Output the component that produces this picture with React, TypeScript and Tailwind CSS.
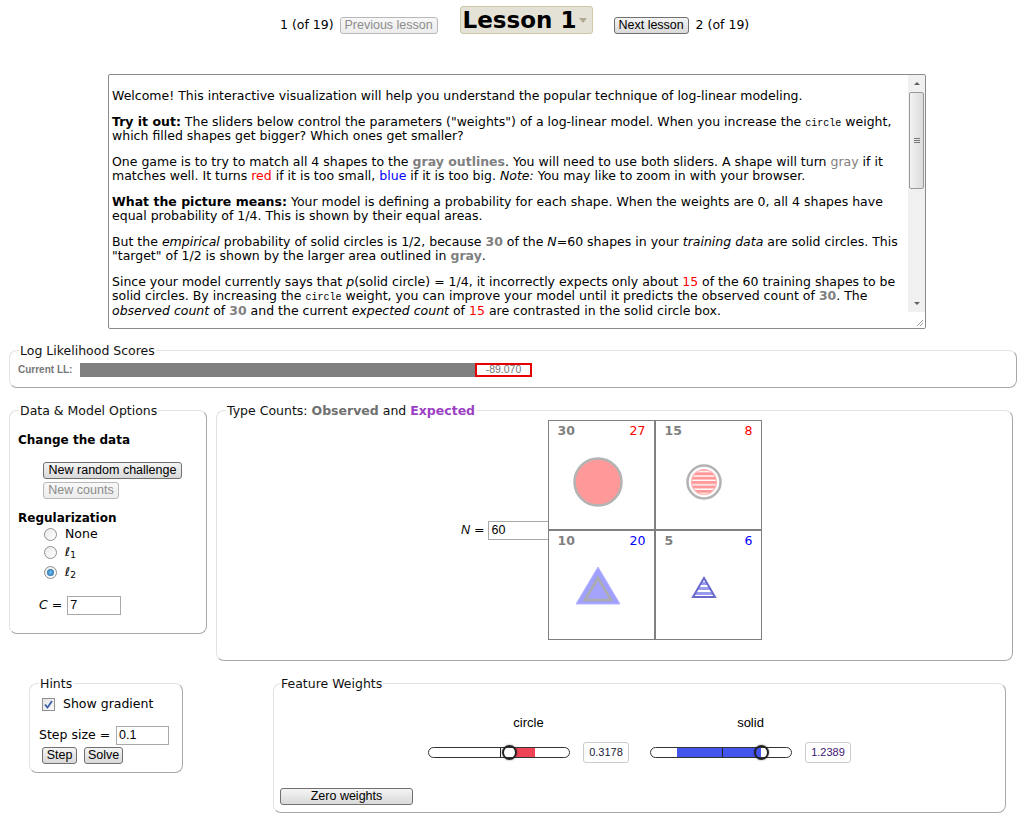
import React from 'react';

const boxCls =
  'rounded-[8px] border border-t-[#e2e2e2] border-l-[#e2e2e2] border-r-[#a8a8a8] border-b-[#a8a8a8] min-w-0';

const Legend = ({ children }: { children: React.ReactNode }) => (
  <legend className="ml-[9px] px-[1px] text-[12.5px] leading-[15px] text-[#111]">{children}</legend>
);

const Btn = ({
  children,
  disabled,
  className = '',
}: {
  children: React.ReactNode;
  disabled?: boolean;
  className?: string;
}) => (
  <button
    className={`h-[17px] rounded-[3px] border px-[3px] text-[12.5px] leading-[15px] font-['Liberation_Sans',Arial,sans-serif] bg-linear-to-b ${
      disabled
        ? 'border-[#b8b8b8] text-[#8c8c8c] from-[#f8f8f8] to-[#ececec]'
        : 'border-[#707070] text-black from-[#f4f4f4] to-[#d9d9d9]'
    } ${className}`}
  >
    {children}
  </button>
);

const Gray = ({ children }: { children: React.ReactNode }) => (
  <b className="text-[#808080]">{children}</b>
);
const Code = ({ children }: { children: React.ReactNode }) => (
  <span className="font-['Liberation_Mono',monospace] text-[10px] leading-[0]">{children}</span>
);

const Radio = ({ checked }: { checked?: boolean }) => (
  <span className="inline-flex h-[13px] w-[13px] items-center justify-center rounded-full border border-[#8e8f8f] bg-linear-to-br from-[#eaeaea] to-[#ffffff]">
    {checked && <span className="h-[7px] w-[7px] rounded-full bg-radial from-[#6ec3f5] to-[#1a5b9a]" />}
  </span>
);

const Slider = ({
  fillFrom,
  fillTo,
  color,
  thumb,
}: {
  fillFrom: number;
  fillTo: number;
  color: string;
  thumb: number;
}) => (
  <div className="relative h-[11px] w-[142px] rounded-full border border-[#333] bg-white">
    <div
      className="absolute top-0 h-[9px]"
      style={{ left: fillFrom, width: fillTo - fillFrom, background: color }}
    />
    <div className="absolute left-[71px] top-0 h-[9px] w-[1px] bg-[#222]" />
    <div
      className="absolute top-[-3px] h-[15px] w-[15px] rounded-full border-2 border-[#222] shadow-[0_0_2px_rgba(0,0,0,0.5)]"
      style={{ left: thumb - 7.5 }}
    />
  </div>
);

const Cell = ({
  obs,
  exp,
  expColor,
  children,
}: {
  obs: string;
  exp: string;
  expColor: string;
  children: React.ReactNode;
}) => (
  <td className="h-[109px] w-[106px] border border-[#808080] p-0 align-top">
    <div className="flex h-[20px] items-center justify-between pl-[8px] pr-[9px] text-[12.5px] leading-[14px]">
      <b className="text-[#808080]">{obs}</b>
      <span className={expColor}>{exp}</span>
    </div>
    <svg width="105" height="88" viewBox="0 0 105 88" className="block">
      {children}
    </svg>
  </td>
);

export default function App() {
  return (
    <div className="min-h-[819px] w-[1021px] bg-white font-['DejaVu_Sans',Verdana,sans-serif] text-[12.5px] text-black">
      {/* header */}
      <div className="flex h-[40px] items-start pl-[280px] text-[12.5px]">
        <span className="mt-[17px] leading-[16px]">1 (of 19)</span>
        <Btn disabled className="ml-[6px] mt-[17px] w-[98px]">Previous lesson</Btn>
        <div className="ml-[22px] mt-[6px] flex h-[28px] w-[133px] items-center rounded-[3px] border border-[#cfc8a6] bg-[#e4e2d7] pl-[2px]">
          <span className="text-[23px] font-bold leading-[26px]">Lesson 1</span>
          <span className="ml-auto mr-[5px] h-0 w-0 border-x-[4px] border-t-[5px] border-x-transparent border-t-[#b1aa90]" />
        </div>
        <Btn className="ml-[21px] mt-[17px] w-[75px]">Next lesson</Btn>
        <span className="ml-[7px] mt-[17px] leading-[16px]">2 (of 19)</span>
      </div>

      {/* intro text */}
      <div className="ml-[108px] mt-[34px] flex h-[255px] w-[818px] overflow-hidden rounded-[2px] border border-[#8a8a8a]">
        <div className="flex-1 overflow-hidden whitespace-nowrap pl-[3px] pt-[14px] leading-[14.4px]">
          <p className="mb-[11.3px]">
            Welcome! This interactive visualization will help you understand the popular technique of log-linear modeling.
          </p>
          <p className="mb-[11.3px]">
            <b>Try it out:</b> The sliders below control the parameters ("weights") of a log-linear model. When you increase the{' '}
            <Code>circle</Code> weight,
            <br />
            which filled shapes get bigger? Which ones get smaller?
          </p>
          <p className="mb-[11px]">
            One game is to try to match all 4 shapes to the <Gray>gray outlines</Gray>. You will need to use both sliders. A shape will
            turn <span className="text-[#808080]">gray</span> if it
            <br />
            matches well. It turns <span className="text-[#ff0000]">red</span> if it is too small,{' '}
            <span className="text-[#0000ff]">blue</span> if it is too big. <i>Note:</i> You may like to zoom in with your browser.
          </p>
          <p className="mb-[11.3px]">
            <b>What the picture means:</b> Your model is defining a probability for each shape. When the weights are 0, all 4 shapes
            have
            <br />
            equal probability of 1/4. This is shown by their equal areas.
          </p>
          <p className="mb-[11.3px]">
            But the <i>empirical</i> probability of solid circles is 1/2, because <Gray>30</Gray> of the <i>N</i>=60 shapes in your{' '}
            <i>training data</i> are solid circles. This
            <br />
            "target" of 1/2 is shown by the larger area outlined in <Gray>gray</Gray>.
          </p>
          <p>
            Since your model currently says that <i>p</i>(solid circle) = 1/4, it incorrectly expects only about{' '}
            <span className="text-[#ff0000]">15</span> of the 60 training shapes to be
            <br />
            solid circles. By increasing the <Code>circle</Code> weight, you can improve your model until it predicts the observed
            count of <Gray>30</Gray>. The
            <br />
            <i>observed count</i> of <Gray>30</Gray> and the current <i>expected count</i> of{' '}
            <span className="text-[#ff0000]">15</span> are contrasted in the solid circle box.
          </p>
        </div>
        {/* scrollbar */}
        <div className="flex w-[17px] flex-col bg-[#f0f0f0]">
          <div className="flex h-[17px] items-center justify-center">
            <span className="h-0 w-0 border-x-[3px] border-b-[3px] border-x-transparent border-b-[#606060]" />
          </div>
          <div className="mx-[1px] flex h-[97px] items-center justify-center rounded-[2px] border border-[#9a9a9a] bg-linear-to-r from-[#f2f2f2] to-[#dcdcdc]">
            <div className="flex w-[6px] flex-col gap-[1px]">
              <span className="h-[1px] bg-[#777]" />
              <span className="h-[1px] bg-[#777]" />
              <span className="h-[1px] bg-[#777]" />
            </div>
          </div>
          <div className="flex-1" />
          <div className="flex h-[17px] items-center justify-center">
            <span className="h-0 w-0 border-x-[3px] border-t-[3px] border-x-transparent border-t-[#606060]" />
          </div>
          <div className="relative h-[16px] bg-white">
            <svg width="16" height="16" className="absolute right-0 top-0">
              <path d="M14 8 L8 14 M14 11 L11 14" stroke="#999" strokeWidth="1" />
            </svg>
          </div>
        </div>
      </div>

      {/* log likelihood */}
      <fieldset className={`${boxCls} ml-[9px] mt-[14px] h-[45px] w-[1008px]`}>
        <Legend>Log Likelihood Scores</Legend>
        <div className="mt-[4px] flex items-center pl-[8px]">
          <span className="w-[62px] font-['Liberation_Sans',Arial,sans-serif] text-[10px] font-bold text-[#777]">Current LL:</span>
          <div className="flex h-[14px] w-[452px] bg-[#808080]">
            <div className="flex-1" />
            <div className="flex w-[57px] items-center justify-center border-2 border-[#e60000] bg-white font-['Liberation_Sans',Arial,sans-serif] text-[10.5px] text-[#777]">
              -89.070
            </div>
          </div>
        </div>
      </fieldset>

      {/* middle row */}
      <div className="mt-[15px] flex items-start">
        <fieldset className={`${boxCls} ml-[9px] h-[231px] w-[198px]`}>
          <Legend>Data &amp; Model Options</Legend>
          <div className="pl-[8px]">
            <div className="mt-[14px] text-[12px] font-bold leading-[16px]">Change the data</div>
            <div className="ml-[25px] mt-[14px] flex flex-col items-start gap-[3px]">
              <Btn className="w-[139px]">New random challenge</Btn>
              <Btn disabled className="w-[76px]">New counts</Btn>
            </div>
            <div className="mt-[11px] text-[12px] font-bold leading-[16px]">Regularization</div>
            <div className="ml-[26px] flex flex-col text-[12.5px]">
              <label className="flex h-[17px] items-center gap-[8px]">
                <Radio /> None
              </label>
              <label className="flex h-[19px] items-center gap-[8px]">
                <Radio />
                <span>
                  <i>ℓ</i>
                  <sub className="text-[9px]">1</sub>
                </span>
              </label>
              <label className="flex h-[20px] items-center gap-[8px]">
                <Radio checked />
                <span>
                  <i>ℓ</i>
                  <sub className="text-[9px]">2</sub>
                </span>
              </label>
            </div>
            <div className="ml-[21px] mt-[14px] flex items-center text-[12.5px]">
              <i>C</i>&nbsp;=&nbsp;
              <div className="ml-[1px] flex h-[19px] w-[54px] items-center border border-[#a9a9a9] pl-[2px] font-['Liberation_Sans',Arial,sans-serif] text-[12.5px]">
                7
              </div>
            </div>
          </div>
        </fieldset>

        <fieldset className={`${boxCls} ml-[9px] h-[258px] w-[797px]`}>
          <Legend>
            Type Counts: <b className="text-[#707070]">Observed</b> and <b className="text-[#9b3fc4]">Expected</b>
          </Legend>
          <div className="mt-[2px] flex items-center pl-[244px]">
            <span className="text-[12.5px]">
              <i className="font-['Liberation_Sans',Arial,sans-serif]">N</i> =
            </span>
            <div className="ml-[4px] flex h-[19px] w-[61px] items-center border border-[#a9a9a9] pl-[2px] font-['Liberation_Sans',Arial,sans-serif] text-[12.5px]">
              60
            </div>
            <table className="-ml-[1px] border-separate border-spacing-0">
              <tbody>
                <tr>
                  <Cell obs="30" exp="27" expColor="text-[#ff0000]">
                    <circle cx="49" cy="41" r="23.5" fill="#ff9999" stroke="#b3b3b3" strokeWidth="2.5" />
                  </Cell>
                  <Cell obs="15" exp="8" expColor="text-[#ff0000]">
                    <defs>
                      <pattern id="pinkStripes" width="6" height="4.4" patternUnits="userSpaceOnUse" y="0.5">
                        <rect width="6" height="4.4" fill="#ff9999" />
                        <rect y="3" width="6" height="1.4" fill="#ffffff" />
                      </pattern>
                      <pattern id="blueStripes" width="6" height="5" patternUnits="userSpaceOnUse" y="1">
                        <rect width="6" height="5" fill="#9a9aee" />
                        <rect y="3" width="6" height="2" fill="#ffffff" />
                      </pattern>
                    </defs>
                    <circle cx="48" cy="41" r="16.5" fill="none" stroke="#b3b3b3" strokeWidth="2.5" />
                    <circle cx="48" cy="41" r="12.5" fill="url(#pinkStripes)" stroke="#ffb0b0" strokeWidth="1.2" />
                  </Cell>
                </tr>
                <tr>
                  <Cell obs="10" exp="20" expColor="text-[#0000ff]">
                    <polygon points="49,16 71,53 27,53" fill="#a0a0ff" stroke="#b4b4ff" strokeWidth="1" />
                    <polygon points="49,27 62,49 36,49" fill="#a4a4ff" stroke="#acacac" strokeWidth="2.5" />
                  </Cell>
                  <Cell obs="5" exp="6" expColor="text-[#0000ff]">
                    <polygon points="48,27 59,46 37,46" fill="url(#blueStripes)" stroke="#6a6acc" strokeWidth="2" />
                  </Cell>
                </tr>
              </tbody>
            </table>
          </div>
        </fieldset>
      </div>

      {/* bottom row */}
      <div className="mt-[15px] flex items-start">
        <fieldset className={`${boxCls} ml-[29px] h-[97px] w-[154px]`}>
          <Legend>Hints</Legend>
          <div className="pl-[12px]">
            <label className="mt-[4px] flex items-center gap-[8px] text-[12.5px]">
              <span className="flex h-[13px] w-[13px] items-center justify-center border border-[#8e8f8f] bg-linear-to-br from-[#e4e4e4] to-[#fafafa]">
                <svg width="9" height="9" viewBox="0 0 9 9">
                  <path d="M1 4.5 L3.5 7.5 L8 1" fill="none" stroke="#3c5fa8" strokeWidth="1.8" />
                </svg>
              </span>
              Show gradient
            </label>
            <div className="mt-[12px] flex items-center text-[12.5px]">
              <span className="-ml-[3px]">Step size =&nbsp;</span>
              <div className="ml-[2px] flex h-[19px] w-[53px] items-center border border-[#a9a9a9] pl-[2px] font-['Liberation_Sans',Arial,sans-serif] text-[12.5px]">
                0.1
              </div>
            </div>
            <div className="mt-[2px] flex gap-[7px]">
              <Btn className="w-[35px]">Step</Btn>
              <Btn className="w-[39px]">Solve</Btn>
            </div>
          </div>
        </fieldset>

        <fieldset className={`${boxCls} ml-[90px] h-[137px] w-[733px]`}>
          <legend className="ml-[6px] px-[1px] text-[12.5px] leading-[15px] text-[#111]">Feature Weights</legend>
          <div className="mt-[24px] flex pl-[154px] font-['Liberation_Sans',Arial,sans-serif]">
            <div className="flex w-[201px] flex-col items-center">
              <span className="text-[13px] leading-[16px]">circle</span>
              <div className="mt-[11px] flex w-full items-center">
                <Slider fillFrom={86} fillTo={106} color="#ee4455" thumb={80} />
                <div className="ml-[13px] flex h-[21px] w-[46px] items-center justify-center rounded-[3px] border border-[#cccccc] text-[11px] text-[#1c1c3c]">
                  0.3178
                </div>
              </div>
            </div>
            <div className="ml-[21px] flex w-[201px] flex-col items-center">
              <span className="text-[13px] leading-[16px]">solid</span>
              <div className="mt-[11px] flex w-full items-center">
                <Slider fillFrom={26} fillTo={110} color="#4455ee" thumb={110} />
                <div className="ml-[13px] flex h-[21px] w-[46px] items-center justify-center rounded-[3px] border border-[#cccccc] text-[11px] text-[#3c1470]">
                  1.2389
                </div>
              </div>
            </div>
          </div>
          <div className="mt-[24px] pl-[6px]">
            <Btn className="w-[133px]">Zero weights</Btn>
          </div>
        </fieldset>
      </div>
    </div>
  );
}
